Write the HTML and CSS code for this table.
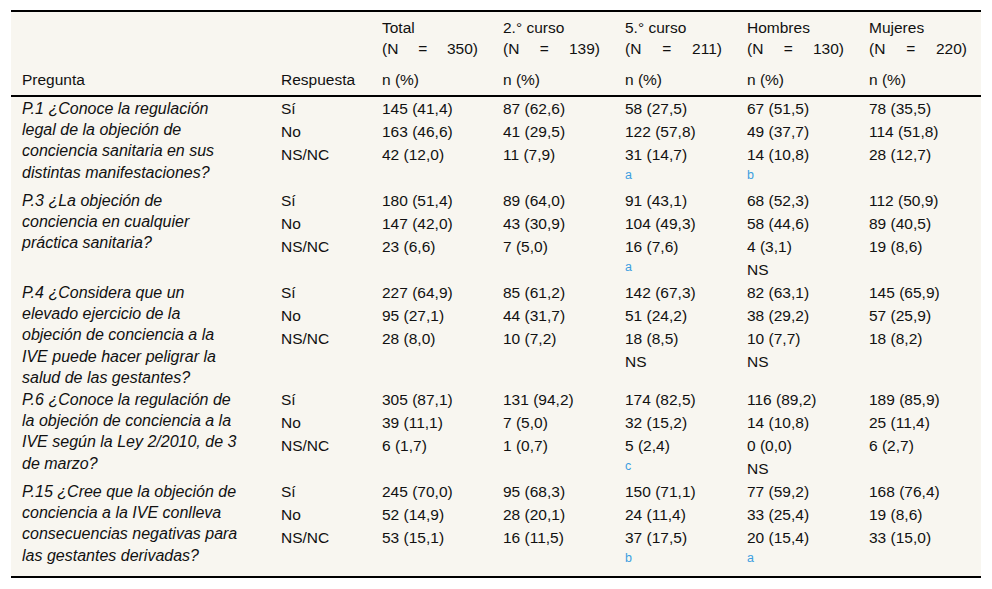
FILE: index.html
```html
<!DOCTYPE html>
<html lang="es">
<head>
<meta charset="utf-8">
<title>Tabla</title>
<link rel="stylesheet" href="styles.css">
</head>
<body>
<table class="tbl">
  <colgroup>
    <col class="c-q"><col class="c-r"><col class="c-d1"><col class="c-d"><col class="c-d"><col class="c-d"><col class="c-dl">
  </colgroup>
  <thead>
    <tr class="h1">
      <th></th><th></th>
      <th>Total<span class="nn">(N = 350)</span></th>
      <th>2.° curso<span class="nn">(N = 139)</span></th>
      <th>5.° curso<span class="nn">(N = 211)</span></th>
      <th>Hombres<span class="nn">(N = 130)</span></th>
      <th>Mujeres<span class="nn">(N = 220)</span></th>
    </tr>
    <tr class="h2">
      <th>Pregunta</th><th>Respuesta</th><th>n (%)</th><th>n (%)</th><th>n (%)</th><th>n (%)</th><th>n (%)</th>
    </tr>
  </thead>
  <tbody>
    <tr>
      <td class="q">P.1 ¿Conoce la regulación legal de la objeción de conciencia sanitaria en sus distintas manifestaciones?</td>
      <td>Sí<br>No<br>NS/NC</td>
      <td>145 (41,4)<br>163 (46,6)<br>42 (12,0)</td>
      <td>87 (62,6)<br>41 (29,5)<br>11 (7,9)</td>
      <td>58 (27,5)<br>122 (57,8)<br>31 (14,7)<br><sup class="ref">a</sup></td>
      <td>67 (51,5)<br>49 (37,7)<br>14 (10,8)<br><sup class="ref">b</sup></td>
      <td>78 (35,5)<br>114 (51,8)<br>28 (12,7)</td>
    </tr>
    <tr>
      <td class="q">P.3 ¿La objeción de conciencia en cualquier práctica sanitaria?</td>
      <td>Sí<br>No<br>NS/NC</td>
      <td>180 (51,4)<br>147 (42,0)<br>23 (6,6)</td>
      <td>89 (64,0)<br>43 (30,9)<br>7 (5,0)</td>
      <td>91 (43,1)<br>104 (49,3)<br>16 (7,6)<br><sup class="ref">a</sup></td>
      <td>68 (52,3)<br>58 (44,6)<br>4 (3,1)<br>NS</td>
      <td>112 (50,9)<br>89 (40,5)<br>19 (8,6)</td>
    </tr>
    <tr>
      <td class="q">P.4 ¿Considera que un elevado ejercicio de la objeción de conciencia a la IVE puede hacer peligrar la salud de las gestantes?</td>
      <td>Sí<br>No<br>NS/NC</td>
      <td>227 (64,9)<br>95 (27,1)<br>28 (8,0)</td>
      <td>85 (61,2)<br>44 (31,7)<br>10 (7,2)</td>
      <td>142 (67,3)<br>51 (24,2)<br>18 (8,5)<br>NS</td>
      <td>82 (63,1)<br>38 (29,2)<br>10 (7,7)<br>NS</td>
      <td>145 (65,9)<br>57 (25,9)<br>18 (8,2)</td>
    </tr>
    <tr>
      <td class="q">P.6 ¿Conoce la regulación de la objeción de conciencia a la IVE según la Ley 2/2010, de 3 de marzo?</td>
      <td>Sí<br>No<br>NS/NC</td>
      <td>305 (87,1)<br>39 (11,1)<br>6 (1,7)</td>
      <td>131 (94,2)<br>7 (5,0)<br>1 (0,7)</td>
      <td>174 (82,5)<br>32 (15,2)<br>5 (2,4)<br><sup class="ref">c</sup></td>
      <td>116 (89,2)<br>14 (10,8)<br>0 (0,0)<br>NS</td>
      <td>189 (85,9)<br>25 (11,4)<br>6 (2,7)</td>
    </tr>
    <tr class="last">
      <td class="q">P.15 ¿Cree que la objeción de conciencia a la IVE conlleva consecuencias negativas para las gestantes derivadas?</td>
      <td>Sí<br>No<br>NS/NC</td>
      <td>245 (70,0)<br>52 (14,9)<br>53 (15,1)</td>
      <td>95 (68,3)<br>28 (20,1)<br>16 (11,5)</td>
      <td>150 (71,1)<br>24 (11,4)<br>37 (17,5)<br><sup class="ref">b</sup></td>
      <td>77 (59,2)<br>33 (25,4)<br>20 (15,4)<br><sup class="ref">a</sup></td>
      <td>168 (76,4)<br>19 (8,6)<br>33 (15,0)</td>
    </tr>
  </tbody>
</table>
</body>
</html>
```

FILE: styles.css
```css
html, body {
  margin: 0;
  padding: 0;
  background: #ffffff;
}

body {
  font-family: "Liberation Sans", Arial, Helvetica, sans-serif;
  font-size: 15.5px;
  color: #111111;
}

.tbl {
  margin: 10px 0 0 11px;
  width: 970px;
  table-layout: fixed;
  border-collapse: separate;
  border-spacing: 0;
  background: #f8f6f0;
}

.c-q { width: 259px; }
.c-r { width: 101px; }
.c-d1 { width: 121px; }
.c-d { width: 122px; }
.c-dl { width: 123px; }

.tbl th,
.tbl td {
  text-align: left;
  font-weight: normal;
  padding: 0 14px 0 11px;
  vertical-align: top;
}

.tbl thead th {
  line-height: 21px;
}

.h1 th {
  border-top: 2px solid #000;
  padding-top: 5px;
  padding-bottom: 5px;
}

.h2 th {
  border-bottom: 2px solid #000;
  padding-top: 5px;
  padding-bottom: 5px;
  vertical-align: bottom;
}

.nn {
  display: block;
  text-align: justify;
  text-align-last: justify;
}

.tbl tbody td {
  line-height: 23px;
}

.tbl tbody td.q {
  font-style: italic;
  font-size: 16px;
  line-height: 21.2px;
  padding-top: 1px;
  padding-right: 31px;
}

.tbl tbody tr.last td {
  padding-bottom: 4px;
  border-bottom: 2px solid #000;
}

.ref {
  font-size: 12.5px;
  line-height: 0;
  color: #3d9ee0;
  vertical-align: 4px;
}
```
